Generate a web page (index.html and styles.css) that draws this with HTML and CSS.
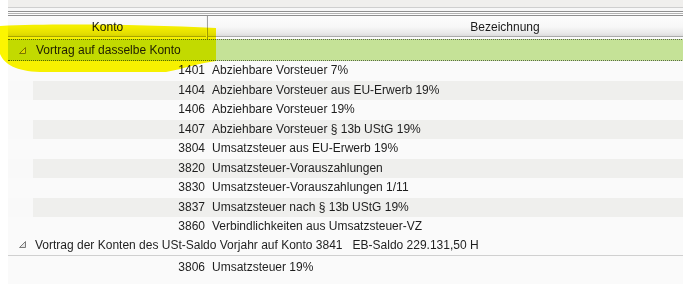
FILE: index.html
```html
<!DOCTYPE html>
<html lang="de">
<head>
<meta charset="utf-8">
<link rel="stylesheet" href="styles.css">
</head>
<body>
<div class="page">
  <div class="topbar"></div>
  <div class="grid">
    <div class="header">
      <div class="hcell hkonto">Konto</div>
      <div class="hcell hbez">Bezeichnung</div>
    </div>
    <div class="gap"></div>
    <div class="group selected">
      <svg class="tri" width="7" height="7" viewBox="0 0 7 7"><polygon points="6.5,0.5 6.5,6.5 0.5,6.5" fill="#e6e6e6" stroke="#7a7a7a" stroke-width="1"/></svg>
      <span>Vortrag auf dasselbe Konto</span>
    </div>
    <div class="row"><span class="num">1401</span><span class="name">Abziehbare Vorsteuer 7%</span></div>
    <div class="row alt"><span class="num">1404</span><span class="name">Abziehbare Vorsteuer aus EU-Erwerb 19%</span></div>
    <div class="row"><span class="num">1406</span><span class="name">Abziehbare Vorsteuer 19%</span></div>
    <div class="row alt"><span class="num">1407</span><span class="name">Abziehbare Vorsteuer § 13b UStG 19%</span></div>
    <div class="row"><span class="num">3804</span><span class="name">Umsatzsteuer aus EU-Erwerb 19%</span></div>
    <div class="row alt"><span class="num">3820</span><span class="name">Umsatzsteuer-Vorauszahlungen</span></div>
    <div class="row"><span class="num">3830</span><span class="name">Umsatzsteuer-Vorauszahlungen 1/11</span></div>
    <div class="row alt"><span class="num">3837</span><span class="name">Umsatzsteuer nach § 13b UStG 19%</span></div>
    <div class="row"><span class="num">3860</span><span class="name">Verbindlichkeiten aus Umsatzsteuer-VZ</span></div>
    <div class="group second">
      <svg class="tri" width="7" height="7" viewBox="0 0 7 7"><polygon points="6.5,0.5 6.5,6.5 0.5,6.5" fill="#e6e6e6" stroke="#7a7a7a" stroke-width="1"/></svg>
      <span>Vortrag der Konten des USt-Saldo Vorjahr auf Konto 3841&nbsp;&nbsp; EB-Saldo 229.131,50 H</span>
    </div>
    <div class="row after"><span class="num">3806</span><span class="name">Umsatzsteuer 19%</span></div>
    <div class="row"></div>
  </div>
  <svg class="marker" width="230" height="80" viewBox="0 0 230 80">
    <path d="M0,26 C60,23 150,25 216,28 L216,61 C200,63 186,68 166,72 L40,72 C16,71 5,65 0,54 Z" fill="#fcf600"/>
  </svg>
</div>
</body>
</html>
```

FILE: styles.css
```css
html, body {
  margin: 0;
  padding: 0;
  background: #fafafa;
}
.page {
  position: relative;
  width: 683px;
  height: 284px;
  overflow: hidden;
  font-family: "Liberation Sans", Arial, sans-serif;
  font-size: 12px;
  color: #1e1e1e;
  background: #ffffff;
}
.topbar {
  height: 16px;
  margin-left: 8px;
  background: linear-gradient(to bottom,
    #f0efed 0, #f0efed 7px,
    #cfcfcf 7px, #cfcfcf 8px,
    #f7f7f7 8px, #f7f7f7 11px,
    #8f8f8f 11px, #8f8f8f 12px,
    #fdfdfd 12px, #fdfdfd 13px,
    #b4b4b4 13px, #b4b4b4 14px,
    #fdfdfd 14px, #fdfdfd 15px,
    #8f8f8f 15px, #8f8f8f 16px);
}
.grid {
  margin-left: 8px;
  width: 794px;
  background: #fafafa;
}
.header {
  display: grid;
  grid-template-columns: 200px 594px;
  height: 20px;
  border-bottom: 1px solid #a9a9a9;
  background: linear-gradient(to bottom, #fdfdfd 0%, #f7f7f7 55%, #e9e9e9 85%, #dcdcdc 100%);
}
.hcell {
  line-height: 23px;
  text-align: center;
  color: #1a1a1a;
}
.hkonto {
  border-right: 1px solid #a0a0a0;
  box-shadow: inset -1px 0 0 #f4f4f4;
}
.gap {
  height: 2px;
  background: #fafafa;
}
.group {
  display: flex;
  align-items: center;
  white-space: nowrap;
}
.group .tri {
  margin-left: 11px;
  margin-right: 10px;
  flex: none;
}
.group.selected {
  height: 20px;
  background: #c5e297;
  border-top: 1px dotted #5a6a4a;
  border-bottom: 1px dotted #5a6a4a;
}
.group.second {
  height: 16px;
  padding-bottom: 2px;
  border-bottom: 1px solid #d0d0d0;
  background: #fafafa;
}
.group.second .tri {
  margin-right: 9px;
}
.row {
  display: grid;
  grid-template-columns: 200px 1fr;
  height: 19.5px;
  line-height: 19.5px;
  white-space: nowrap;
  background: #fafafa;
}
.row.alt {
  background: linear-gradient(to right, #f9f9f9 25px, #efefed 25px);
}
.row.after {
  height: 21px;
  line-height: 23px;
}
.num {
  text-align: right;
  padding-right: 3px;
}
.name {
  padding-left: 4px;
}
.marker {
  position: absolute;
  left: 0;
  top: 0;
  mix-blend-mode: multiply;
  pointer-events: none;
}
```
